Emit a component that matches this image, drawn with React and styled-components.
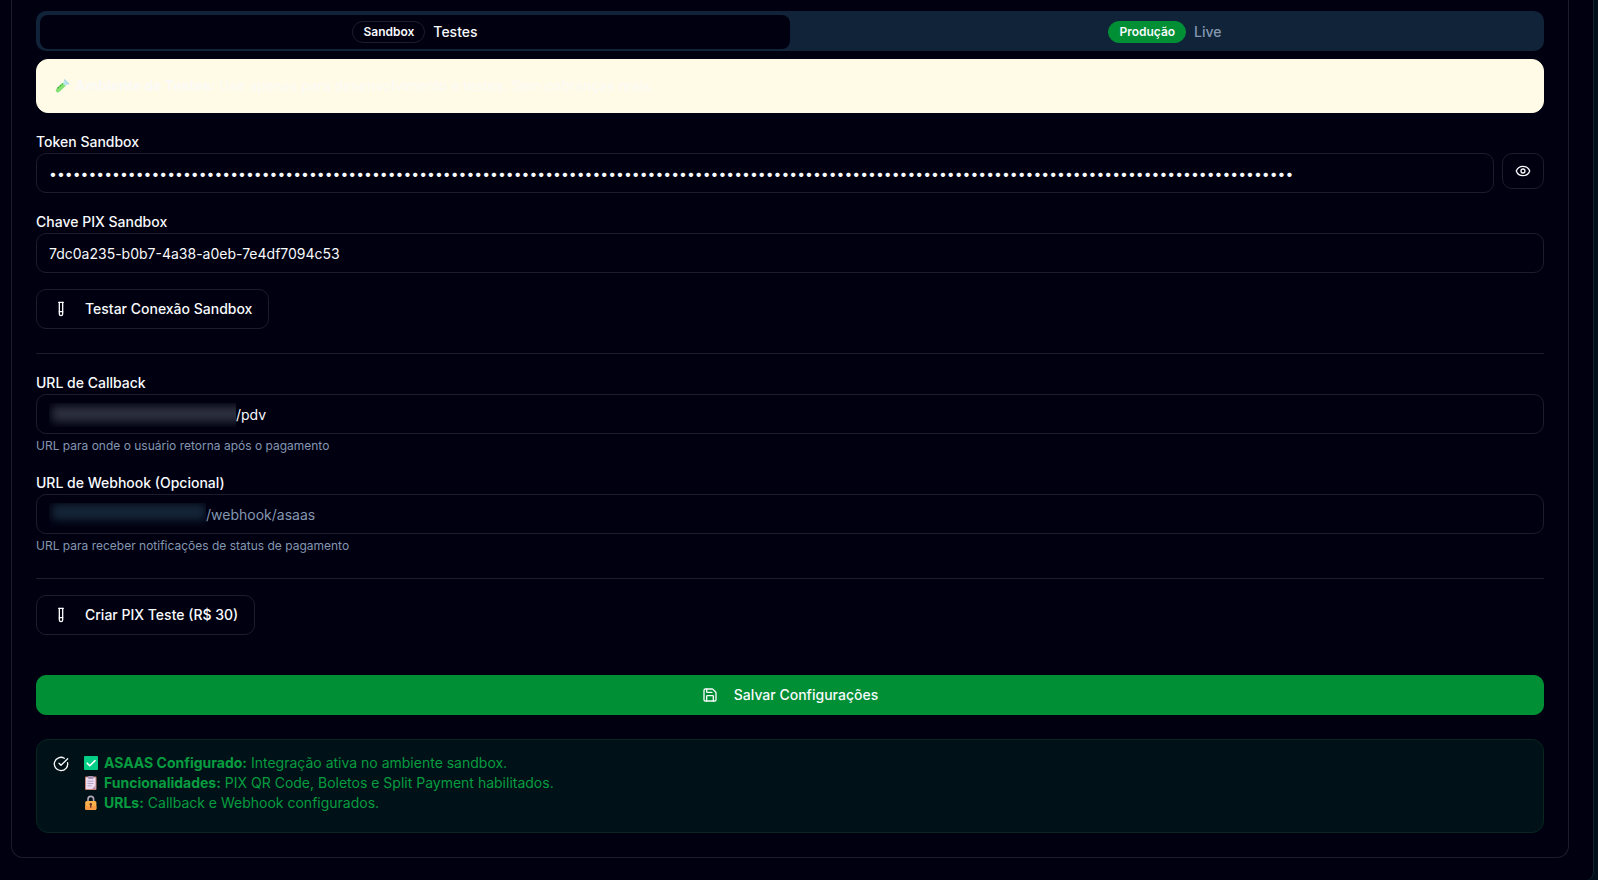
import React, { useState } from 'react';
import styled, { createGlobalStyle } from 'styled-components';
import { CircleCheckBig, Eye, Save, TestTube } from 'lucide-react';

const GlobalStyle = createGlobalStyle`
  * {
    box-sizing: border-box;
  }
  body {
    margin: 0;
    background: #000f1a;
    color: #f8fafc;
    font-family: Inter, sans-serif;
    font-size: 14px;
    line-height: 20px;
  }
  button,
  input {
    font-family: inherit;
  }
`;

const Page = styled.div`
  padding-right: 4px;
`;

const Panel = styled.main`
  padding: 0 24px 22px 11px;
  background: #000011;
  border-right: 1px solid #142332;
  border-bottom-right-radius: 8px;
`;

const Card = styled.form`
  padding: 11px 24px 24px;
  border: 1px solid #1b1d2c;
  border-top: none;
  border-radius: 0 0 12px 12px;
`;

const Tabs = styled.div`
  display: grid;
  grid-template-columns: 1fr 1fr;
  height: 40px;
  padding: 4px 4px 2px;
  border-radius: 10px;
  background: #112338;
`;

const Tab = styled.button`
  display: flex;
  align-items: center;
  justify-content: center;
  gap: 8px;
  padding: 0 12px;
  border: none;
  border-radius: 8px;
  background: ${({ $active }) => ($active ? '#000011' : 'transparent')};
  color: ${({ $active }) => ($active ? '#f8fafc' : '#8497b0')};
  font-size: 14px;
  font-weight: 500;
  line-height: 20px;
`;

const Badge = styled.span`
  padding: 2px 10px;
  border: 1px solid ${({ $live }) => ($live ? '#008f35' : '#1b1d2c')};
  border-radius: 999px;
  background: ${({ $live }) => ($live ? '#008f35' : 'transparent')};
  color: #f8fafc;
  font-size: 12px;
  font-weight: 600;
  line-height: 16px;
`;

const Notice = styled.div`
  display: flex;
  align-items: center;
  gap: 4px;
  margin-top: 8px;
  padding: 16px;
  border: 1px solid #fffbe6;
  border-radius: 12px;
  background: #fffbe6;
  color: #fbfaf7;
`;

const Field = styled.div`
  margin-top: 16px;
`;

const Label = styled.label`
  display: block;
  padding-top: 2px;
  font-weight: 500;
  line-height: 22px;
`;

const Row = styled.div`
  display: flex;
  align-items: flex-start;
  gap: 8px;
`;

const InputFrame = styled.div`
  display: flex;
  flex: 1;
  align-items: center;
  height: 40px;
  padding: 2px 12px 0;
  border: 1px solid #1b1d2c;
  border-radius: 10px;
`;

const Input = styled.input`
  flex: 1;
  min-width: 0;
  padding: 0;
  border: none;
  outline: none;
  background: transparent;
  color: #f8fafc;
  font-size: 14px;
  line-height: 20px;

  &::placeholder {
    color: #8497b0;
    opacity: 1;
  }
`;

const Redacted = styled.span`
  width: ${({ $width }) => $width};
  height: 24px;
  overflow: hidden;

  &::before {
    content: '';
    display: block;
    height: 16px;
    margin: ${({ $sharp }) => ($sharp ? '3px -8px 0 3px' : '1px 0 0 3px')};
    background: ${({ $color }) => $color};
    filter: blur(4px);
  }
`;

const Hint = styled.p`
  margin: 4px 0 0;
  color: #8497b0;
  font-size: 12px;
  line-height: 16px;
`;

const Separator = styled.hr`
  height: 1px;
  margin: 24px 0 16px;
  border: none;
  background: #1b1d2c;
`;

const Button = styled.button`
  display: inline-flex;
  align-items: center;
  justify-content: center;
  gap: 16px;
  height: 40px;
  padding: 0 16px;
  border: 1px solid #1b1d2c;
  border-radius: 10px;
  background: transparent;
  color: #f8fafc;
  font-size: 14px;
  font-weight: 500;
  line-height: 20px;
`;

const IconButton = styled(Button)`
  width: 42px;
  height: 36px;
  padding: 0;
`;

const SaveButton = styled(Button)`
  display: flex;
  width: 100%;
  margin-top: 40px;
  border-color: #008f35;
  background: #008f35;
`;

const Actions = styled.div`
  display: flex;
  margin-top: ${({ $top }) => $top || '0'};
`;

const Status = styled.div`
  display: flex;
  gap: 13px;
  margin-top: 24px;
  padding: 13px 16px 19px;
  border: 1px solid #06261f;
  border-radius: 12px;
  background: #001217;
  color: #079c40;
`;

const StatusIcon = styled(CircleCheckBig)`
  margin-top: 3px;
  color: #f8fafc;
`;

const StatusLine = styled.div`
  display: flex;
  align-items: center;
  gap: 4px;
`;

const TubeGlyph = () => (
  <svg width='18' height='18' viewBox='0 0 18 18' aria-hidden='true'>
    <path d='m11.5 4 3.2 3L6.2 14.8a1.9 1.9 0 0 1-2.8-2.8Z' fill='#b9e6ee' />
    <path d='M9.2 6 12.5 9l-6.3 5.8a1.9 1.9 0 0 1-2.8-2.8Z' fill='#84e36c' />
    <path d='m4.4 11.4 5.4-4.8' stroke='#3ba53a' strokeWidth='1.2' strokeDasharray='2 1' />
    <path d='m11.6 3 4 4' stroke='#a8d5e8' strokeWidth='1.4' strokeLinecap='round' />
  </svg>
);

const CheckGlyph = () => (
  <svg width='18' height='18' viewBox='0 0 18 18' aria-hidden='true'>
    <rect x='2' y='2' width='14' height='14' rx='1' fill='#05ce86' />
    <path d='m5.2 9.2 2.6 2.6 5.2-5.2' fill='none' stroke='#fff' strokeWidth='1.6' strokeLinecap='round' strokeLinejoin='round' />
  </svg>
);

const ClipboardGlyph = () => (
  <svg width='18' height='18' viewBox='0 0 18 18' aria-hidden='true'>
    <rect x='3' y='2.5' width='11.5' height='13.5' rx='1' fill='#c98278' />
    <rect x='4' y='3.5' width='9.5' height='11.5' fill='#ecdcf2' />
    <rect x='6' y='2' width='5.5' height='3' rx='1' fill='#a892b4' />
    <path d='M5.5 7.2h6M5.5 9.5h6M5.5 11.8h4' stroke='#b7a3c4' />
    <path d='m10 15 3.5-3.5V15Z' fill='#b98fae' />
  </svg>
);

const LockGlyph = () => (
  <svg width='18' height='18' viewBox='0 0 18 18' aria-hidden='true'>
    <path d='M6 8V5.2a2.8 2.8 0 0 1 5.6 0V8' fill='none' stroke='#b4aab9' strokeWidth='1.6' />
    <rect x='3.2' y='7' width='11.2' height='9' rx='1.5' fill='#fcb04c' />
    <path d='M3.2 12h11.2v2.5a1.5 1.5 0 0 1-1.5 1.5H4.7a1.5 1.5 0 0 1-1.5-1.5Z' fill='#f99a43' />
    <circle cx='8.8' cy='10.3' r='1.2' fill='#5c3128' />
    <path d='M8.8 10.5v2.8' stroke='#5c3128' strokeWidth='1.2' strokeLinecap='round' />
  </svg>
);

const statusLines = [
  { Glyph: CheckGlyph, title: 'ASAAS Configurado:', text: 'Integração ativa no ambiente sandbox.' },
  { Glyph: ClipboardGlyph, title: 'Funcionalidades:', text: 'PIX QR Code, Boletos e Split Payment habilitados.' },
  { Glyph: LockGlyph, title: 'URLs:', text: 'Callback e Webhook configurados.' },
];

const App = () => {
  const [showToken, setShowToken] = useState(false);
  const [token, setToken] = useState('0'.repeat(158));
  const [environment, setEnvironment] = useState('sandbox');

  return (
    <Page>
      <GlobalStyle />
      <Panel>
        <Card onSubmit={(e) => e.preventDefault()}>
          <Tabs role='tablist'>
            <Tab
              type='button'
              role='tab'
              aria-selected={environment === 'sandbox'}
              $active={environment === 'sandbox'}
              onClick={() => setEnvironment('sandbox')}
            >
              <Badge>Sandbox</Badge>
              Testes
            </Tab>
            <Tab
              type='button'
              role='tab'
              aria-selected={environment === 'live'}
              $active={environment === 'live'}
              onClick={() => setEnvironment('live')}
            >
              <Badge $live>Produção</Badge>
              Live
            </Tab>
          </Tabs>

          <Notice>
            <TubeGlyph />
            <span>
              <strong>Ambiente de Testes:</strong> Use apenas para desenvolvimento e testes. Sem cobranças reais.
            </span>
          </Notice>

          <Field>
            <Label htmlFor='token'>Token Sandbox</Label>
            <Row>
              <InputFrame>
                <Input
                  id='token'
                  type={showToken ? 'text' : 'password'}
                  value={token}
                  onChange={(e) => setToken(e.target.value)}
                />
              </InputFrame>
              <IconButton type='button' aria-label='Mostrar token' onClick={() => setShowToken(!showToken)}>
                <Eye size={16} />
              </IconButton>
            </Row>
          </Field>

          <Field>
            <Label htmlFor='pix'>Chave PIX Sandbox</Label>
            <InputFrame>
              <Input id='pix' defaultValue='7dc0a235-b0b7-4a38-a0eb-7e4df7094c53' />
            </InputFrame>
          </Field>

          <Actions $top='16px'>
            <Button type='button'>
              <TestTube size={16} />
              Testar Conexão Sandbox
            </Button>
          </Actions>

          <Separator />

          <Field>
            <Label htmlFor='callback'>URL de Callback</Label>
            <InputFrame>
              <Redacted $width='187px' $color='#2c2f3e' $sharp />
              <Input id='callback' defaultValue='/pdv' />
            </InputFrame>
            <Hint>URL para onde o usuário retorna após o pagamento</Hint>
          </Field>

          <Field>
            <Label htmlFor='webhook'>URL de Webhook (Opcional)</Label>
            <InputFrame>
              <Redacted $width='157px' $color='#142638' />
              <Input id='webhook' placeholder='/webhook/asaas' />
            </InputFrame>
            <Hint>URL para receber notificações de status de pagamento</Hint>
          </Field>

          <Separator />

          <Actions>
            <Button type='button'>
              <TestTube size={16} />
              Criar PIX Teste (R$ 30)
            </Button>
          </Actions>

          <SaveButton type='submit'>
            <Save size={16} />
            Salvar Configurações
          </SaveButton>

          <Status role='status'>
            <StatusIcon size={16} />
            <div>
              {statusLines.map(({ Glyph, title, text }) => (
                <StatusLine key={title}>
                  <Glyph />
                  <span>
                    <strong>{title}</strong> {text}
                  </span>
                </StatusLine>
              ))}
            </div>
          </Status>
        </Card>
      </Panel>
    </Page>
  );
};

export default App;
